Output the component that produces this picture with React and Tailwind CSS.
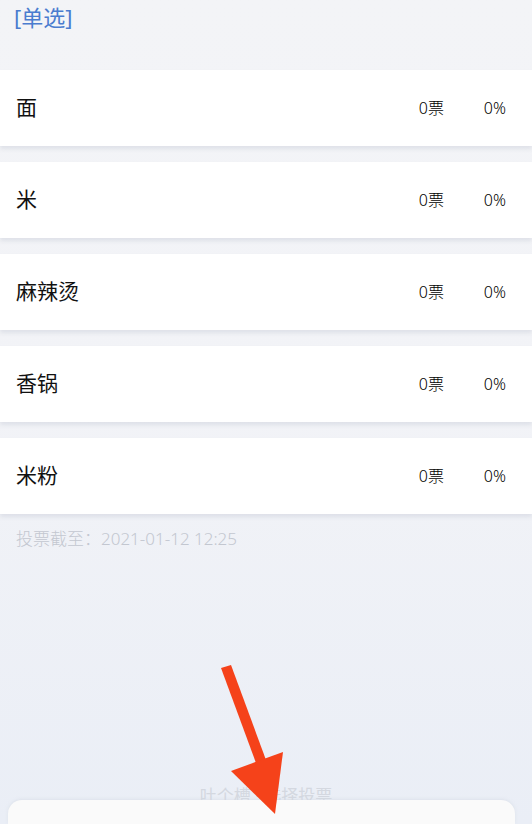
import React from "react";

const options = ["面", "米", "麻辣烫", "香锅", "米粉"];

function OptionRow({ label }) {
    return (
        <div className="flex h-[76px] items-center bg-white pl-4 pr-[26px] shadow-[0_3px_4px_rgba(200,205,215,0.45)]">
            <span className="flex-1 text-[21px] text-[#111]">{label}</span>
            <span className="w-[65px] text-[16px] font-light text-[#000]">0票</span>
            <span className="text-[16px] font-light text-[#000]">0%</span>
        </div>
    );
}

function Arrow() {
    return (
        <svg
            className="pointer-events-none absolute left-0 top-0 z-20"
            width="532"
            height="824"
            viewBox="0 0 532 824"
        >
            <polygon points="221,668 231,665 266,760 256,763" fill="#f5421a" />
            <polygon points="231,771 283,752 275,814" fill="#f5421a" />
        </svg>
    );
}

export default function App() {
    return (
        <div
            className="relative flex h-[824px] w-[532px] flex-col overflow-hidden bg-gradient-to-b from-[#f3f4f7] via-[#f2f3f7] to-[#eaeef6]"
            style={{ fontFamily: '"Noto Sans", "Noto Sans CJK SC", sans-serif' }}
        >
            <div className="pl-[14px] pt-[2px] text-[22px] leading-[30px] text-[#4a7ccf]">[单选]</div>

            <div className="mt-[38px] flex flex-col gap-[16px]">
                {options.map((o) => (
                    <OptionRow key={o} label={o} />
                ))}
            </div>

            <div className="mt-[13px] pl-4 text-[17px] font-light leading-[24px] text-[#c3c7d0]">投票截至：2021-01-12 12:25</div>

            <div className="flex-1" />

            <div className="text-center text-[17px] leading-[20px] text-[#d4d8e0]">吐个槽 · 选择投票</div>

            <div className="relative z-10 ml-2 mr-[17px] -mt-[6px] h-[24px] rounded-t-[14px] bg-[#fafafa] shadow-[0_-1px_3px_rgba(210,215,225,0.5)]" />

            <Arrow />
        </div>
    );
}
